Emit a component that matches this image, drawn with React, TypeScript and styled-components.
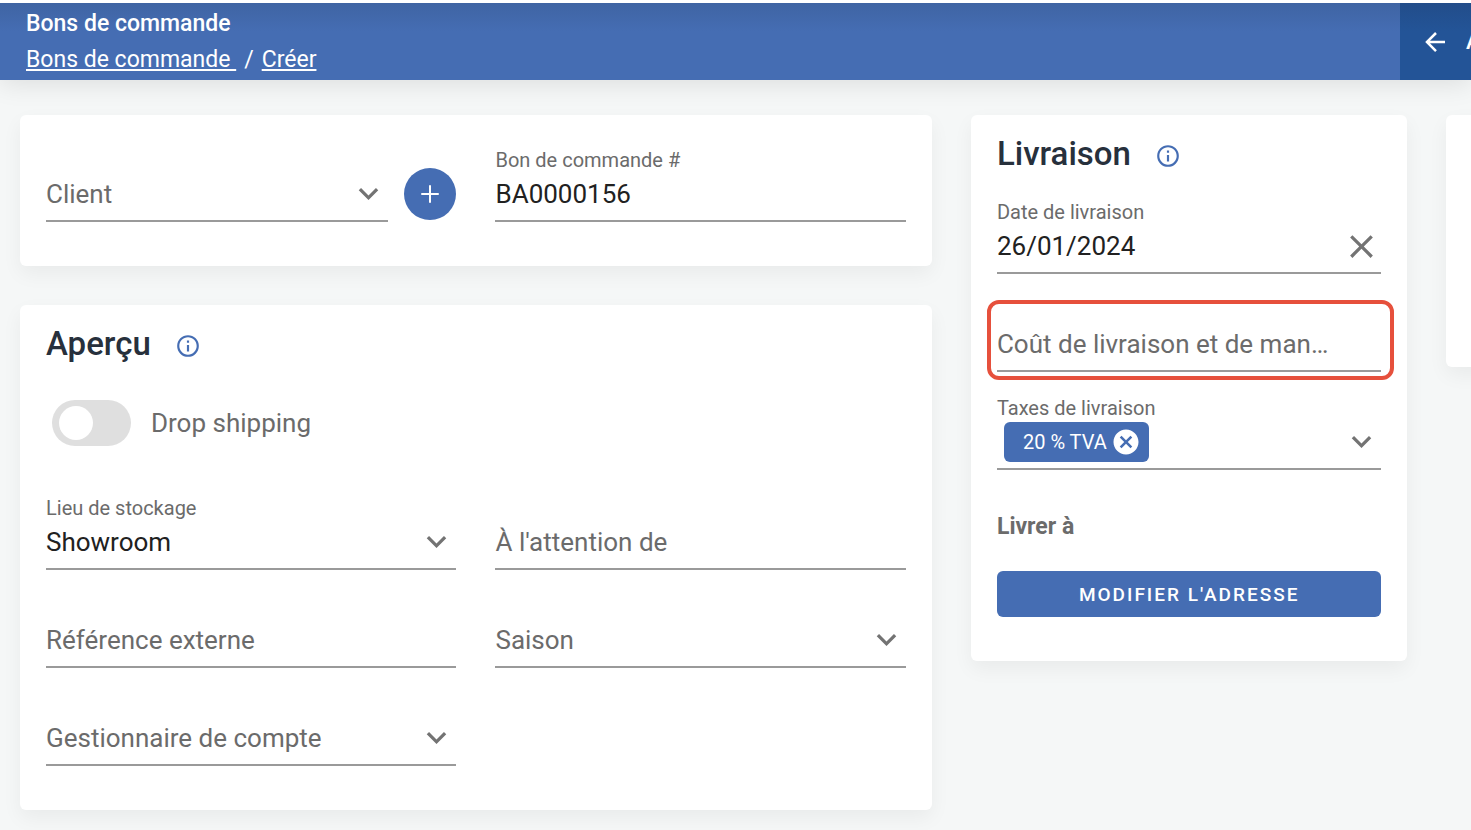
import React, { useState } from "react";
import styled, { createGlobalStyle } from "styled-components";

const color = {
  primary: "#456db3",
  primaryTop: "#3f64a3",
  dark: "#235497",
  darkTop: "#224d8a",
  page: "#f5f7f7",
  heading: "#27303c",
  text: "#212121",
  muted: "#6b6b6b",
  icon: "#737373",
  line: "#9a9a9a",
  track: "#dfdfdf",
  alert: "#e6503c",
};

const icons = {
  info: "M11,9H13V7H11M12,20C7.59,20 4,16.41 4,12C4,7.59 7.59,4 12,4C16.41,4 20,7.59 20,12C20,16.41 16.41,20 12,20M12,2A10,10 0 0,0 2,12A10,10 0 0,0 12,22A10,10 0 0,0 22,12A10,10 0 0,0 12,2M11,17H13V11H11V17Z",
  chevron: "M7.41,8.58L12,13.17L16.59,8.58L18,10L12,16L6,10L7.41,8.58Z",
  close:
    "M19,6.41L17.59,5L12,10.59L6.41,5L5,6.41L10.59,12L5,17.59L6.41,19L12,13.41L17.59,19L19,17.59L13.41,12L19,6.41Z",
  closeCircle:
    "M12,2C17.53,2 22,6.47 22,12C22,17.53 17.53,22 12,22C6.47,22 2,17.53 2,12C2,6.47 6.47,2 12,2M15.59,7L12,10.59L8.41,7L7,8.41L10.59,12L7,15.59L8.41,17L12,13.41L15.59,17L17,15.59L13.41,12L17,8.41L15.59,7Z",
  plus: "M19,12.8H12.8V19H11.2V12.8H5V11.2H11.2V5H12.8V11.2H19V12.8Z",
  arrowLeft:
    "M20,11V13H8L13.5,18.5L12.08,19.92L4.16,12L12.08,4.08L13.5,5.5L8,11H20Z",
};

const GlobalStyle = createGlobalStyle`
  *, *::before, *::after { box-sizing: border-box; }
  body { margin: 0; background: ${color.page}; }
  body, button, input, select { font-family: Roboto, "Liberation Sans", sans-serif; }
`;

const Page = styled.div`
  min-height: 100vh;
  overflow: hidden;
  border-top: 3px solid #fff;
  color: ${color.text};
`;

const Header = styled.header`
  position: relative;
  display: flex;
  background: linear-gradient(${color.primaryTop}, ${color.primary} 28px);
  color: #fff;
  font-size: 23px;
  line-height: 36px;
  box-shadow: 0 4px 24px rgba(0, 0, 0, 0.1);
`;

const Titles = styled.div`
  flex: 1;
  min-width: 0;
  padding: 3px 26px 2px;
`;

const PageTitle = styled.h1`
  margin: 0;
  font-size: inherit;
  font-weight: 500;
`;

const Breadcrumb = styled.nav`
  display: flex;
  gap: 8px;
  white-space: pre;
`;

const Crumb = styled.a`
  color: inherit;
  text-decoration: underline;
`;

const BackButton = styled.button`
  flex: 0 0 71px;
  display: flex;
  align-items: center;
  gap: 16px;
  overflow: hidden;
  padding: 0 0 0 20px;
  border: 0;
  background: linear-gradient(${color.darkTop}, ${color.dark} 28px);
  color: #fff;
  font-size: 23px;
  font-weight: 500;
  cursor: pointer;

  svg {
    flex: none;
  }
`;

const Columns = styled.main`
  display: grid;
  grid-template-columns: repeat(4, minmax(0, 1fr));
  align-items: start;
  gap: 39px;
  width: 128%;
  padding: 35px 0 20px 20px;
`;

const MainColumn = styled.div`
  grid-column: span 2;
  display: grid;
  gap: 39px;
`;

const Card = styled.section<{ $titled?: boolean }>`
  padding: ${(p) => (p.$titled ? 19 : 32)}px 26px 44px;
  border-radius: 6px;
  background: #fff;
  box-shadow: 0 8px 20px rgba(0, 0, 0, 0.05);
`;

const EmptyCard = styled(Card)`
  height: 252px;
`;

const CardHeader = styled.div`
  display: flex;
  gap: 24px;
`;

const CardTitle = styled.h2`
  margin: 0;
  color: ${color.heading};
  font-size: 33px;
  font-weight: 500;
  line-height: 40px;
`;

const IconButton = styled.button<{ $tone?: string }>`
  flex: none;
  display: flex;
  align-items: center;
  padding: 0;
  border: 0;
  background: none;
  color: ${(p) => p.$tone ?? color.icon};
  cursor: pointer;
`;

const InfoButton = styled(IconButton)`
  padding-top: 3px;
`;

const FieldGrid = styled.div<{ $columns?: number }>`
  display: grid;
  grid-template-columns: repeat(${(p) => p.$columns ?? 1}, minmax(0, 1fr));
  gap: 23px 39px;
`;

const DeliveryFields = styled(FieldGrid)`
  margin-top: 25px;
`;

const FieldWithAction = styled.div`
  display: flex;
  align-items: flex-end;
  gap: 16px;
`;

const FieldBox = styled.div`
  flex: 1;
  min-width: 0;
  display: grid;
  grid-template-rows: 26px 42px;
  padding-bottom: 5px;
  border-bottom: 2px solid ${color.line};
`;

const FieldLabel = styled.label<{ $floating: boolean }>`
  grid-column: 1;
  grid-row: ${(p) => (p.$floating ? 1 : 2)};
  z-index: 1;
  color: ${color.muted};
  font-size: ${(p) => (p.$floating ? 20 : 26)}px;
  line-height: ${(p) => (p.$floating ? 26 : 42)}px;
  white-space: nowrap;
  pointer-events: none;
`;

const FieldControl = styled.div`
  grid-column: 1;
  grid-row: 2;
  display: flex;
  align-items: center;
  min-width: 0;
`;

const SelectControl = styled.div`
  flex: 1;
  min-width: 0;
  display: grid;
  grid-template-columns: minmax(0, 1fr) 39px;
  align-items: start;
  color: ${color.icon};

  svg {
    grid-area: 1 / 2;
    margin-top: 1px;
    pointer-events: none;
  }
`;

const TextInput = styled.input`
  flex: 1;
  min-width: 0;
  height: 42px;
  padding: 0;
  border: 0;
  outline: 0;
  background: none;
  color: ${color.text};
  font-size: 26px;
`;

const SelectInput = styled.select`
  grid-area: 1 / 1 / 2 / 3;
  width: 100%;
  height: 42px;
  padding: 0;
  border: 0;
  outline: 0;
  appearance: none;
  background: none;
  color: ${color.text};
  font-size: 26px;
  cursor: pointer;
`;

const Highlight = styled.div`
  position: relative;

  &::after {
    content: "";
    position: absolute;
    inset: 3px -13px -8px -10px;
    border: 4px solid ${color.alert};
    border-radius: 12px;
    pointer-events: none;
  }
`;

const RoundButton = styled.button`
  flex: none;
  display: grid;
  place-items: center;
  width: 52px;
  height: 52px;
  margin-bottom: 2px;
  padding: 0;
  border: 0;
  border-radius: 50%;
  background: ${color.primary};
  color: #fff;
  cursor: pointer;
`;

const SwitchRow = styled.label`
  display: flex;
  align-items: center;
  gap: 20px;
  margin: 36px 0 49px;
  padding-left: 6px;
  color: ${color.muted};
  font-size: 26px;
  line-height: 46px;
`;

const Switch = styled.input`
  appearance: none;
  display: flex;
  align-items: center;
  width: 79px;
  height: 46px;
  margin: 0;
  padding: 0 7px;
  border-radius: 23px;
  background: ${color.track};
  cursor: pointer;

  &::before {
    content: "";
    width: 34px;
    height: 34px;
    border-radius: 50%;
    background: #fff;
  }

  &:checked {
    justify-content: flex-end;
    background: ${color.primary};
  }
`;

const Chip = styled.span`
  flex: none;
  display: flex;
  align-items: center;
  gap: 4px;
  height: 40px;
  margin-left: 7px;
  padding: 0 8px 0 19px;
  border-radius: 6px;
  background: ${color.primary};
  color: #fff;
  font-size: 20px;
`;

const SubTitle = styled.h3`
  margin: 42px 0 29px;
  color: ${color.muted};
  font-size: 23px;
  font-weight: 700;
  line-height: 30px;
`;

const WideButton = styled.button`
  width: 100%;
  height: 46px;
  border: 0;
  border-radius: 6px;
  background: ${color.primary};
  color: #fff;
  font-size: 19px;
  font-weight: 500;
  letter-spacing: 2px;
  text-transform: uppercase;
  cursor: pointer;
`;

function Icon({ name, size }: { name: keyof typeof icons; size: number }) {
  return (
    <svg width={size} height={size} viewBox="0 0 24 24" fill="currentColor" aria-hidden="true">
      <path d={icons[name]} />
    </svg>
  );
}

interface FieldProps {
  id: string;
  label: string;
  floating?: boolean;
  children: React.ReactNode;
}

function Field({ id, label, floating = false, children }: FieldProps) {
  return (
    <FieldBox>
      <FieldLabel htmlFor={id} $floating={floating}>
        {label}
      </FieldLabel>
      <FieldControl>{children}</FieldControl>
    </FieldBox>
  );
}

interface TextFieldProps {
  id: string;
  label: string;
  initial?: string;
  clearable?: boolean;
}

function TextField({ id, label, initial = "", clearable }: TextFieldProps) {
  const [value, setValue] = useState(initial);
  return (
    <Field id={id} label={label} floating={value !== ""}>
      <TextInput id={id} type="text" value={value} onChange={(e) => setValue(e.target.value)} />
      {clearable && (
        <IconButton type="button" aria-label="Effacer" onClick={() => setValue("")}>
          <Icon name="close" size={39} />
        </IconButton>
      )}
    </Field>
  );
}

function Dropdown({ id, value }: { id: string; value?: string }) {
  return (
    <SelectControl>
      <SelectInput id={id} defaultValue={value ?? ""}>
        <option value={value ?? ""}>{value ?? ""}</option>
      </SelectInput>
      <Icon name="chevron" size={39} />
    </SelectControl>
  );
}

function SelectField({ id, label, value }: { id: string; label: string; value?: string }) {
  return (
    <Field id={id} label={label} floating={Boolean(value)}>
      <Dropdown id={id} value={value} />
    </Field>
  );
}

function TitledHeader({ title }: { title: string }) {
  return (
    <CardHeader>
      <CardTitle>{title}</CardTitle>
      <InfoButton type="button" aria-label="Informations" $tone={color.primary}>
        <Icon name="info" size={26} />
      </InfoButton>
    </CardHeader>
  );
}

export default function App() {
  return (
    <>
      <GlobalStyle />
      <Page>
        <Header>
          <Titles>
            <PageTitle>Bons de commande</PageTitle>
            <Breadcrumb>
              <Crumb href="#commandes">{"Bons de commande "}</Crumb>
              <span>/</span>
              <Crumb href="#creer">Créer</Crumb>
            </Breadcrumb>
          </Titles>
          <BackButton type="button">
            <Icon name="arrowLeft" size={30} />
            <span>A</span>
          </BackButton>
        </Header>

        <Columns>
          <MainColumn>
            <Card>
              <FieldGrid $columns={2}>
                <FieldWithAction>
                  <SelectField id="client" label="Client" />
                  <RoundButton type="button" aria-label="Ajouter">
                    <Icon name="plus" size={30} />
                  </RoundButton>
                </FieldWithAction>
                <TextField id="order-number" label="Bon de commande #" initial="BA0000156" />
              </FieldGrid>
            </Card>

            <Card $titled>
              <TitledHeader title="Aperçu" />
              <SwitchRow>
                <Switch type="checkbox" role="switch" />
                Drop shipping
              </SwitchRow>
              <FieldGrid $columns={2}>
                <SelectField id="storage" label="Lieu de stockage" value="Showroom" />
                <TextField id="attention" label="À l'attention de" />
                <TextField id="reference" label="Référence externe" />
                <SelectField id="season" label="Saison" />
                <SelectField id="manager" label="Gestionnaire de compte" />
              </FieldGrid>
            </Card>
          </MainColumn>

          <Card $titled>
            <TitledHeader title="Livraison" />
            <DeliveryFields>
              <TextField
                id="delivery-date"
                label="Date de livraison"
                initial="26/01/2024"
                clearable
              />
              <Highlight>
                <TextField id="delivery-cost" label="Coût de livraison et de man…" />
              </Highlight>
              <Field id="delivery-taxes" label="Taxes de livraison" floating>
                <Chip>
                  20 % TVA
                  <IconButton type="button" aria-label="Retirer" $tone="#fff">
                    <Icon name="closeCircle" size={30} />
                  </IconButton>
                </Chip>
                <Dropdown id="delivery-taxes" />
              </Field>
            </DeliveryFields>
            <SubTitle>Livrer à</SubTitle>
            <WideButton type="button">Modifier l'adresse</WideButton>
          </Card>

          <EmptyCard />
        </Columns>
      </Page>
    </>
  );
}
